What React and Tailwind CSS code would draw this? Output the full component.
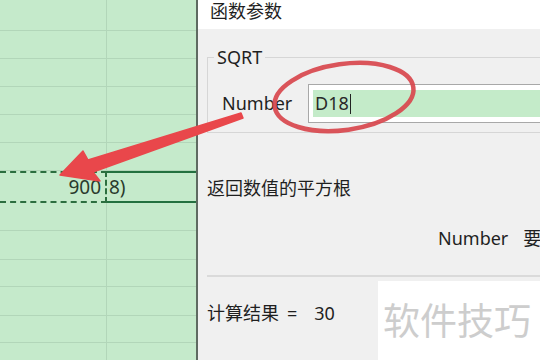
import React from 'react';

const rowsTop = [31, 28, 28, 28, 28, 28];
const rowsBottom = [28, 29, 27, 29, 27, 28];

const SheetRow = ({ h }) => (
  <div className="flex border-b border-[#b2d6b9] shrink-0" style={{ height: h }}>
    <div className="w-[107px] border-r border-[#b2d6b9]"></div>
    <div className="flex-1"></div>
  </div>
);

const Sheet = () => {
  return (
    <div className="w-[196px] h-full flex flex-col bg-[#c5eacb] shrink-0 overflow-hidden">
      {rowsTop.map((h, i) => <SheetRow key={'t' + i} h={h} />)}
      {/* copied range + selected cell */}
      <div className="flex h-[32px] shrink-0">
        <div className="w-[107px] border-2 border-dashed border-[#2b6e3f] border-l-0 flex items-center justify-end pr-[4px] text-[19px] text-[#2a3a2c]">
          900
        </div>
        <div className="flex-1 border-y-2 border-[#23703f] flex items-center pl-[2px] text-[19px] text-[#2a3a2c]">
          8)
        </div>
      </div>
      {rowsBottom.map((h, i) => <SheetRow key={'b' + i} h={h} />)}
    </div>
  );
};

const Dialog = () => {
  return (
    <div className="flex-1 h-full flex flex-col border-l-2 border-[#5e6a61] overflow-hidden text-[#1f1f1f]">
      {/* title */}
      <div className="h-[29px] bg-white pl-[12px] text-[18px] leading-[22px] shrink-0">函数参数</div>

      <div className="flex-1 bg-[#f0f0f0] flex flex-col">
        <fieldset className="mt-[17px] ml-[9px] -mr-[30px] border border-[#d6d6d6] px-0 pt-[16px] pb-[9px]">
          <legend className="ml-[6px] px-[3px] text-[18px] leading-[22px]">SQRT</legend>
          <div className="flex items-center h-[39px]">
            <div className="w-[100px] pl-[14px] text-[18px]">Number</div>
            <div className="flex-1 h-full border border-[#a8a8a8] bg-white p-[5px] pl-[4px] flex">
              <div className="flex-1 bg-[#c4ebc9] flex items-center pl-[2px] text-[18px] text-[#2a2a2a]">
                D18<span className="inline-block w-[1.5px] h-[20px] bg-[#222] ml-[1px]"></span>
              </div>
            </div>
          </div>
        </fieldset>

        <div className="mt-[43px] pl-[9px] text-[18px] leading-[24px]">返回数值的平方根</div>

        <div className="mt-[26px] pl-[240px] text-[18px] leading-[24px] whitespace-nowrap flex">
          <span>Number</span>
          <span className="ml-[15px]">要</span>
        </div>

        <div className="mt-[25px] ml-[9px] h-[2px] bg-[#dadada]"></div>

        <div className="mt-[24px] pl-[9px] text-[18px] leading-[24px] flex whitespace-nowrap">
          <span>计算结果</span>
          <span className="ml-[8px]">=</span>
          <span className="ml-[17px]">30</span>
        </div>
      </div>
    </div>
  );
};

export default function App() {
  return (
    <div className="relative w-[540px] h-[360px] overflow-hidden flex bg-[#f0f0f0] font-['Noto_Sans','Noto_Sans_CJK_SC',sans-serif]">
      <Sheet />
      <Dialog />

      {/* annotations */}
      <svg className="absolute inset-0 pointer-events-none" width="540" height="360" viewBox="0 0 540 360">
        <ellipse cx="344" cy="97" rx="70" ry="33" transform="rotate(-8 344 97)" fill="none" stroke="#d8464d" strokeWidth="4.5" opacity="0.92" />
        <polygon
          points="60,175 83,151 88,160 241,113 243,118 93,172 100,181"
          fill="#e9474b"
          stroke="#e9474b"
          strokeWidth="1.5"
          strokeLinejoin="round"
        />
      </svg>

      {/* watermark */}
      <div className="absolute left-[378px] top-[281px] right-0 bottom-0 bg-white pl-[5px] pt-[16px] text-[37px] leading-[44px] text-[#cdcdcd] whitespace-nowrap font-['Noto_Sans_CJK_SC',sans-serif]">
        软件技巧
      </div>
    </div>
  );
}
